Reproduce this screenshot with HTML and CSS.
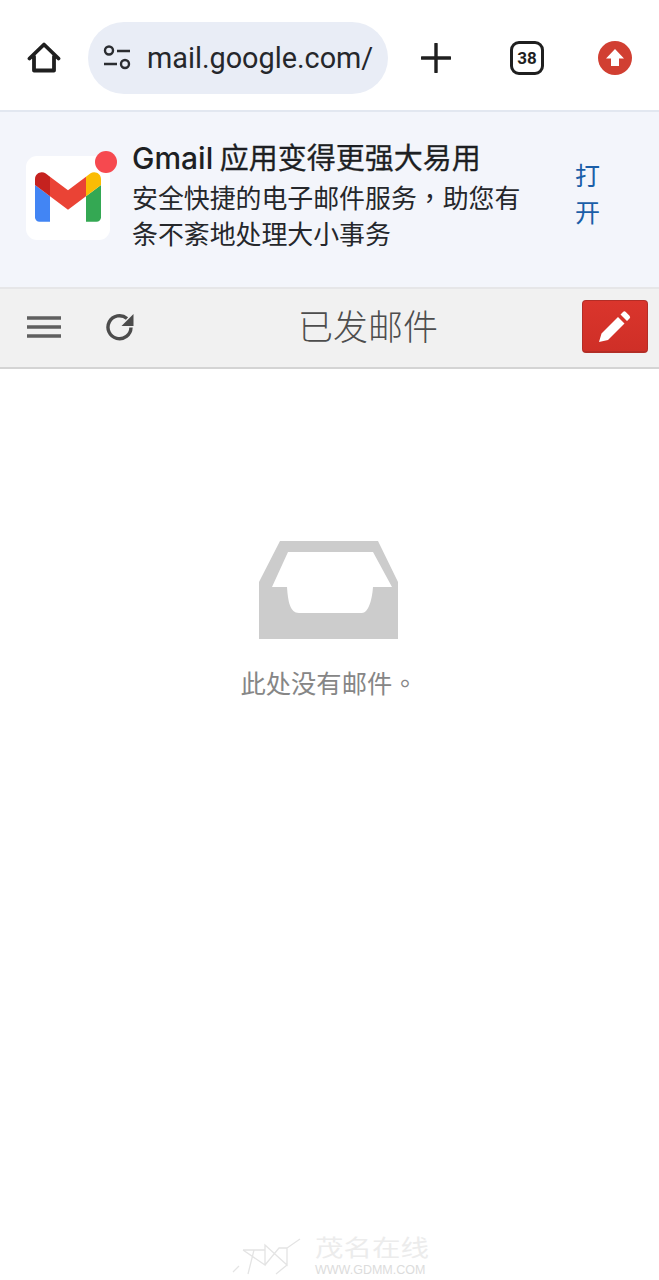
FILE: index.html
```html
<!DOCTYPE html>
<html lang="zh-CN">
<head>
<meta charset="utf-8">
<title>已发邮件</title>
<link rel="stylesheet" href="styles.css">
</head>
<body>
<div class="page">
  <header class="browser">
    <svg class="home" viewBox="0 0 34 34" width="34" height="34"><path d="M2.500 17.500 17 3.500l14.500 14M7 15.500v14h20v-14" fill="none" stroke="#1f1f1f" stroke-width="3.800" stroke-linejoin="round" stroke-linecap="round"/></svg>
    <div class="pill">
      <svg class="tune" viewBox="0 0 30 26" width="30" height="26"><circle cx="7" cy="5.500" r="4" fill="none" stroke="#2b2d31" stroke-width="2.400"/><path d="M15 6h13M2 19h13" stroke="#2b2d31" stroke-width="2.600"/><circle cx="23" cy="19" r="4" fill="none" stroke="#2b2d31" stroke-width="2.400"/></svg>
      <span class="url">mail.google.com/</span>
    </div>
    <svg class="plus" viewBox="0 0 30 30" width="30" height="30"><path d="M15 1v28M1 15h28" stroke="#1f1f1f" stroke-width="3.400" stroke-linecap="round"/></svg>
    <div class="tabs">38</div>
    <svg class="update" viewBox="0 0 34 34" width="34" height="34"><circle cx="17" cy="17" r="17" fill="#d13f32"/><path d="M17 8 26 17.500H21V25H13V17.500H8Z" fill="#fff"/></svg>
  </header>

  <section class="promo">
    <div class="app-card">
      <svg class="gmail" viewBox="52 42 88 66" width="66" height="50">
        <path fill="#4285f4" d="M58 108h14V74L52 59v43c0 3.320 2.690 6 6 6"/>
        <path fill="#34a853" d="M120 108h14c3.320 0 6-2.690 6-6V59l-20 15"/>
        <path fill="#fbbc04" d="M120 48v26l20-15v-8c0-7.420-8.470-11.650-14.400-7.200"/>
        <path fill="#ea4335" d="M72 74V48l24 18 24-18v26L96 92"/>
        <path fill="#c5221f" d="M52 51v8l20 15V48l-5.600-4.200c-5.940-4.450-14.400-.22-14.400 7.200"/>
      </svg>
      <span class="dot"></span>
    </div>
    <div class="promo-text">
      <div class="promo-title"><span class="latin">Gmail</span> 应用变得更强大易用</div>
      <div class="promo-desc">安全快捷的电子邮件服务<span class="punct" lang="zh-Hant">，</span>助您有</div>
      <div class="promo-desc">条不紊地处理大小事务</div>
    </div>
    <div class="open">打开</div>
  </section>

  <nav class="toolbar">
    <svg class="menu" viewBox="0 0 34 24" width="34" height="24"><path d="M0 3h34M0 12h34M0 21h34" stroke="#5f5f5f" stroke-width="3.400"/></svg>
    <svg class="refresh" viewBox="0 0 30 30" width="30" height="30"><path d="M26 15.500A11.500 11.500 0 1 1 22 6.500" fill="none" stroke="#4c4c4c" stroke-width="3.400"/><path d="M28.500 2v12h-12Z" fill="#4c4c4c"/></svg>
    <h1 class="title">已发邮件</h1>
    <button class="compose" type="button">
      <svg viewBox="0 0 36 36" width="36" height="36"><path d="M2 34l2.500-8.500L21 9l6.500 6.500L11 32ZM23.500 6.500 26 4a2 2 0 0 1 2.800 0l3.700 3.700a2 2 0 0 1 0 2.800L30 13Z" fill="#fff"/></svg>
    </button>
  </nav>

  <main class="empty">
    <svg class="tray" viewBox="0 0 140 99" width="140" height="99"><path fill-rule="evenodd" fill="#cccccc" d="M21 0H119L139 41V98H0V41ZM29 11 13 46H28C29 60 31 72 40 72H103C109 72 113 60 114 46H133L114 11Z"/></svg>
    <p class="empty-text">此处没有邮件<span class="punct" lang="zh-Hant">。</span></p>
  </main>

  <div class="watermark">
    <svg class="wm-logo" viewBox="0 0 70 38" width="70" height="38"><path d="M1 34 7 28M11 12 33 27V7L55 27V10L68 1M11 12H33M33 27 47 10H55M22 12 16 36M55 27 44 36" fill="none" stroke="#e4e4e4" stroke-width="1.300"/></svg>
    <div class="wm-text">
      <span class="wm-cn">茂名在线</span>
      <span class="wm-en">WWW.GDMM.COM</span>
    </div>
  </div>
</div>
</body>
</html>
```
FILE: styles.css
```css
* { box-sizing: border-box; }
html, body { margin: 0; padding: 0; background: #fff; }
body { font-family: "Noto Sans CJK SC", "Noto Sans", sans-serif; }
.page { position: relative; width: 659px; height: 1280px; overflow: hidden; background: #fff; display: flex; flex-direction: column; }

.browser { height: 112px; flex: none; display: flex; align-items: center; padding: 6px 0 0 27px; background: #fff; border-bottom: 2px solid #e2e7f0; }
.home { flex: none; }
.pill { width: 300px; height: 72px; margin-left: 27px; border-radius: 36px; background: #e9edf6; display: flex; align-items: center; padding-left: 14px; flex: none; }
.tune { flex: none; }
.url { margin-left: 15px; font-family: Roboto, sans-serif; font-size: 28.800px; color: #25272b; white-space: nowrap; }
.plus { margin-left: 33px; flex: none; }
.tabs { margin-left: 59px; width: 34px; height: 34px; border: 3.500px solid #1f1f1f; border-radius: 9px; display: flex; align-items: center; justify-content: center; font-family: Roboto, sans-serif; font-size: 17px; font-weight: 700; color: #1f1f1f; flex: none; }
.update { margin-left: 54px; flex: none; }

.promo { height: 175px; flex: none; display: flex; align-items: flex-start; background: #f3f5fb; padding: 0 0 0 26px; }
.app-card { position: relative; width: 84px; height: 84px; margin-top: 44px; border-radius: 11px; background: #fff; display: flex; align-items: center; justify-content: center; flex: none; }
.gmail { margin-bottom: 2px; }
.dot { position: absolute; top: -5px; right: -7px; width: 22px; height: 22px; border-radius: 50%; background: #f6494f; }
.promo-text { width: 395px; margin-left: 22px; padding-top: 23px; flex: none; }
.promo-title { font-size: 29px; line-height: 42px; margin-bottom: 2px; font-weight: 400; color: #1d1f23; white-space: nowrap; -webkit-text-stroke: 0.300px #1d1f23; }
.latin { font-family: Inter, sans-serif; font-size: 30px; font-weight: 500; line-height: 0; -webkit-text-stroke: 0; }
.promo-desc { font-size: 25.900px; line-height: 36px; color: #25272b; white-space: nowrap; }
.punct { font-family: "Noto Sans CJK TC", sans-serif; line-height: 0; }
.open { width: 26px; margin-left: 48px; margin-top: 44px; font-size: 25px; line-height: 37px; color: #1a5ea8; flex: none; }

.toolbar { height: 82px; flex: none; display: flex; align-items: center; background: #f1f1f1; border-top: 2px solid #e6e6e8; border-bottom: 2px solid #d4d4d4; padding: 0 0 2px 27px; }
.menu { flex: none; }
.refresh { margin-left: 44px; flex: none; }
.title { margin: 0 0 4px 163px; font-size: 35px; line-height: 44px; font-weight: 300; color: #4d4d4d; white-space: nowrap; }
.compose { margin: 0 0 1px 144px; width: 66px; height: 53px; padding: 0; border: 1px solid #b32d26; border-bottom-width: 2px; border-radius: 4px; background: linear-gradient(#da352c, #cf2f27); display: flex; align-items: center; justify-content: center; flex: none; }

.empty { flex: none; display: flex; flex-direction: column; align-items: center; padding-top: 172px; padding-right: 1px; }
.tray { display: block; }
.empty-text { margin: 24px 0 0; font-size: 25.300px; line-height: 36px; color: #868686; white-space: nowrap; }

.watermark { position: absolute; left: 232px; top: 1238px; display: flex; gap: 13px; align-items: flex-start; }
.wm-text { display: flex; flex-direction: column; align-items: flex-start; }
.wm-cn { display: block; font-size: 28.500px; line-height: 18px; transform: scaleY(.78); color: #ececec; white-space: nowrap; }
.wm-en { margin-top: 9px; font-family: "Liberation Sans", sans-serif; font-size: 12.500px; line-height: 11px; color: #dcdcdc; white-space: nowrap; }
```
